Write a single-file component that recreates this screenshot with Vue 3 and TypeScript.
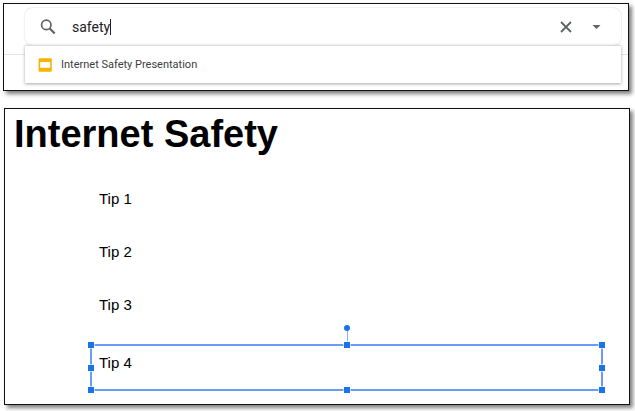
<script setup lang="ts">
import { ref } from 'vue'

const query = ref('safety')
const suggestions = ref<string[]>(['Internet Safety Presentation'])
const tips = ['Tip 1', 'Tip 2', 'Tip 3']
const handles = ['nw', 'n', 'ne', 'w', 'e', 'sw', 's', 'se']

function clearQuery(): void {
  query.value = ''
}
</script>

<template>
  <main class="page">
    <section class="panel search-panel">
      <div class="edge"></div>
      <form class="search" role="search" @submit.prevent>
        <div class="bar">
          <button class="icon-button" type="submit" aria-label="Search">
            <svg width="18" height="18" viewBox="0 0 18 18">
              <circle cx="7.3" cy="6.9" r="4.7" fill="none" stroke="#5f6368" stroke-width="1.7" />
              <path d="M10.7 10.5L15.7 15.5" stroke="#5f6368" stroke-width="2.2" />
            </svg>
          </button>
          <div class="field">
            <input v-model="query" class="query" type="text" aria-label="Search query" />
            <span class="caret"></span>
          </div>
          <button class="icon-button" type="button" aria-label="Clear search" @click="clearQuery">
            <svg width="14" height="14" viewBox="0 0 14 14">
              <path d="M2 2L12 12M12 2L2 12" stroke="#5f6368" stroke-width="1.8" />
            </svg>
          </button>
          <button class="icon-button" type="button" aria-label="Search options">
            <svg width="10" height="6" viewBox="0 0 10 6">
              <path d="M1.5 1H9.5L5.5 5Z" fill="#5f6368" />
            </svg>
          </button>
        </div>
        <div class="results">
          <button v-for="item in suggestions" :key="item" class="result" type="button">
            <svg width="14" height="14" viewBox="0 0 14 14">
              <rect x="0.6" y="0.3" width="13.2" height="13.4" rx="1.3" fill="#f4b400" />
              <rect x="2.2" y="4" width="10" height="5.8" fill="#fff" />
            </svg>
            <span>{{ item }}</span>
          </button>
        </div>
      </form>
      <div class="edge"></div>
    </section>

    <section class="panel slide">
      <h1 class="title">Internet Safety</h1>
      <p v-for="tip in tips" :key="tip" class="tip">{{ tip }}</p>
      <div class="selected">
        <p class="selected-text">Tip 4</p>
        <span class="stem"></span>
        <span class="rotate"></span>
        <span v-for="h in handles" :key="h" class="handle" :class="h"></span>
      </div>
    </section>
  </main>
</template>

<style>
body {
  margin: 0;
  background: #fff;
}
</style>

<style scoped>
.page {
  display: flex;
  flex-direction: column;
  gap: 17px;
  padding: 3px 5px 6px 4px;
}

.panel {
  box-sizing: border-box;
  border: 1px solid #111;
  background: #fff;
  box-shadow: 3px 3px 4px rgba(0, 0, 0, 0.5);
}

.search-panel {
  display: flex;
  margin: 0 1px 0 -1px;
  padding: 4px 0 7px;
}

.edge {
  flex: 0 0 7px;
  height: 46px;
  border-bottom: 1px solid #e4e4e4;
}

.edge:first-child {
  flex-basis: 21px;
}

.search {
  flex: 1;
  min-width: 0;
}

.bar {
  display: flex;
  align-items: center;
  height: 37px;
  padding-right: 10px;
  padding-left: 8px;
  border-radius: 8px;
  box-shadow: 0 0 2px rgba(0, 0, 0, 0.2);
}

.icon-button {
  display: flex;
  align-items: center;
  justify-content: center;
  width: 30px;
  height: 30px;
  padding: 0;
  border: 0;
  background: none;
}

.field {
  display: flex;
  flex: 1;
  align-items: center;
  min-width: 0;
  padding-left: 9px;
}

.query {
  field-sizing: content;
  padding: 0;
  border: 0;
  outline: 0;
  background: none;
  color: #202124;
  font: 14px/20px Roboto, sans-serif;
}

.caret {
  width: 1px;
  height: 16px;
  background: #202124;
}

.results {
  position: relative;
  border-top: 1px solid #dadce0;
  background: #fff;
  box-shadow: 0 1px 3px rgba(0, 0, 0, 0.35);
}

.result {
  display: flex;
  align-items: center;
  gap: 9px;
  width: 100%;
  height: 37px;
  padding: 0 13px;
  border: 0;
  background: none;
  color: #3c4043;
  font: 11px/16px Roboto, sans-serif;
  text-align: left;
}

.slide {
  padding: 0 26px 13px 85px;
  color: #000;
  font-family: "Liberation Sans", Arial, sans-serif;
}

.title {
  margin: 0 0 15px -76px;
  padding-top: 2px;
  font-size: 38px;
  font-weight: bold;
  line-height: 46px;
}

.tip {
  margin: 0;
  padding-left: 9px;
  font-size: 15px;
  line-height: 53px;
}

.selected {
  position: relative;
  box-sizing: border-box;
  height: 47px;
  margin-top: 13px;
  border: 2px solid #669df6;
}

.selected-text {
  margin: 0;
  padding: 7px;
  font-size: 15px;
  line-height: 20px;
}

.handle {
  position: absolute;
  width: 6px;
  height: 6px;
  background: #1a73e8;
  outline: 1px solid rgba(255, 255, 255, 0.6);
  transform: translate(-50%, -50%);
}

.nw, .n, .ne {
  top: -1px;
}

.w, .e {
  top: 50%;
}

.sw, .s, .se {
  top: calc(100% + 1px);
}

.nw, .w, .sw {
  left: -1px;
}

.n, .s {
  left: 50%;
}

.ne, .e, .se {
  left: calc(100% + 1px);
}

.stem {
  position: absolute;
  top: -18px;
  left: 50%;
  width: 1px;
  height: 16px;
  background: #8ab4f8;
}

.rotate {
  position: absolute;
  top: -18px;
  left: 50%;
  width: 6px;
  height: 6px;
  border-radius: 50%;
  background: #1a73e8;
  transform: translate(-50%, -50%);
}
</style>
